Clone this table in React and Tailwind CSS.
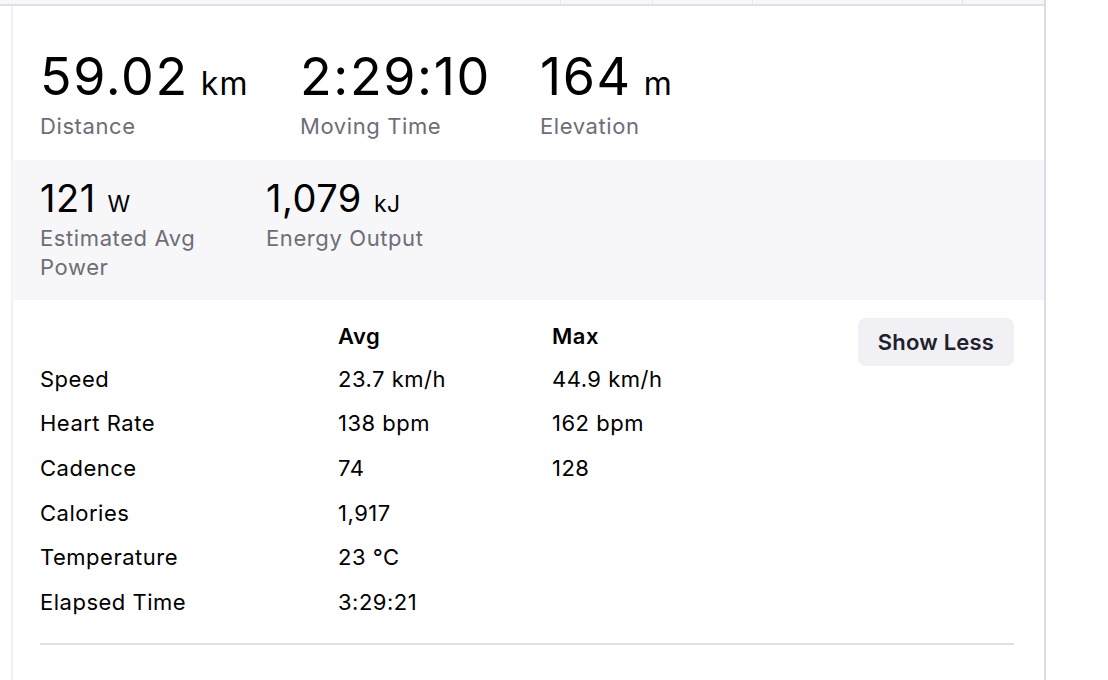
import React from "react";

const font = { fontFamily: "Inter, 'Noto Sans', sans-serif" };

function BigStat({ value, unit, label, width }) {
  return (
    <div className={"flex flex-col shrink-0 " + width}>
      <div className="text-black leading-[46px] whitespace-nowrap">
        <span className="text-[52px] tracking-[1.6px]">{value}</span>
        {unit && <span className="ml-[12px] text-[32px] tracking-[1.2px]">{unit}</span>}
      </div>
      <div className="text-[22px] leading-[28px] tracking-[0.6px] text-[#6d6d78]">{label}</div>
    </div>
  );
}

function SmallStat({ value, unit, label, width }) {
  return (
    <div className={"shrink-0 " + width}>
      <div className="text-black leading-[36px] whitespace-nowrap">
        <span className="text-[38px] tracking-[0.5px]">{value}</span>
        {unit && <span className="ml-[12px] text-[23px] tracking-[0.5px]">{unit}</span>}
      </div>
      <div className="text-[22px] leading-[29px] tracking-[0.6px] text-[#6d6d78]">{label}</div>
    </div>
  );
}

const rows = [
  ["Speed", "23.7 km/h", "44.9 km/h"],
  ["Heart Rate", "138 bpm", "162 bpm"],
  ["Cadence", "74", "128"],
  ["Calories", "1,917", ""],
  ["Temperature", "23 \u00B0C", ""],
  ["Elapsed Time", "3:29:21", ""],
];

export default function App() {
  return (
    <div className="w-[1108px] h-[680px] bg-white overflow-hidden flex" style={font}>
      <div className="w-[1044px] flex flex-col">
        <div className="h-[6px] bg-[#f7f7fa] border-b-2 border-[#dfdfe8] flex shrink-0">
          <div className="w-[561px] border-r border-[#e8e8ee]" />
          <div className="w-[92px] border-r border-[#e8e8ee]" />
          <div className="w-[100px] border-r border-[#e8e8ee]" />
          <div className="w-[210px] border-r border-[#dfdfe8]" />
        </div>
        <div className="flex-1 ml-[11px] border-l-2 border-[#f0f0f4] flex flex-col">
          <div className="h-[154px] pl-[27px] pt-[48px] flex">
            <BigStat value="59.02" unit="km" label="Distance" width="w-[260px]" />
            <BigStat value="2:29:10" label="Moving Time" width="w-[240px]" />
            <BigStat value="164" unit="m" label="Elevation" width="" />
          </div>
          <div className="h-[140px] bg-[#f7f7fa] -ml-[1px] pl-[28px] pt-[20px] flex">
            <SmallStat value="121" unit="W" label="Estimated Avg Power" width="w-[186px] mr-[40px]" />
            <SmallStat value="1,079" unit="kJ" label="Energy Output" width="w-[220px]" />
          </div>
          <div className="pl-[27px] pr-[30px] pt-[17px] flex flex-col text-[22px] tracking-[0.5px] text-black">
            <div className="flex h-[40px] items-center font-semibold">
              <div className="w-[298px]" />
              <div className="w-[214px] -mt-[2px]">Avg</div>
              <div className="-mt-[2px]">Max</div>
              <button className="ml-auto self-start mt-[1px] w-[156px] h-[48px] rounded-[8px] bg-[#f0f0f5] text-[22px] tracking-[0.2px] font-semibold text-[#21212b]">
                Show Less
              </button>
            </div>
            {rows.map(([a, b, c]) => (
              <div key={a} className="flex h-[44.6px] items-center">
                <div className="w-[298px]">{a}</div>
                <div className="w-[214px]">{b}</div>
                <div>{c}</div>
              </div>
            ))}
            <div className="mt-[18px] h-[2px] bg-[#dfdfe4]" />
          </div>
        </div>
      </div>
      <div className="w-[2px] bg-[#dcdce4]" />
      <div className="flex-1 bg-white" />
    </div>
  );
}
